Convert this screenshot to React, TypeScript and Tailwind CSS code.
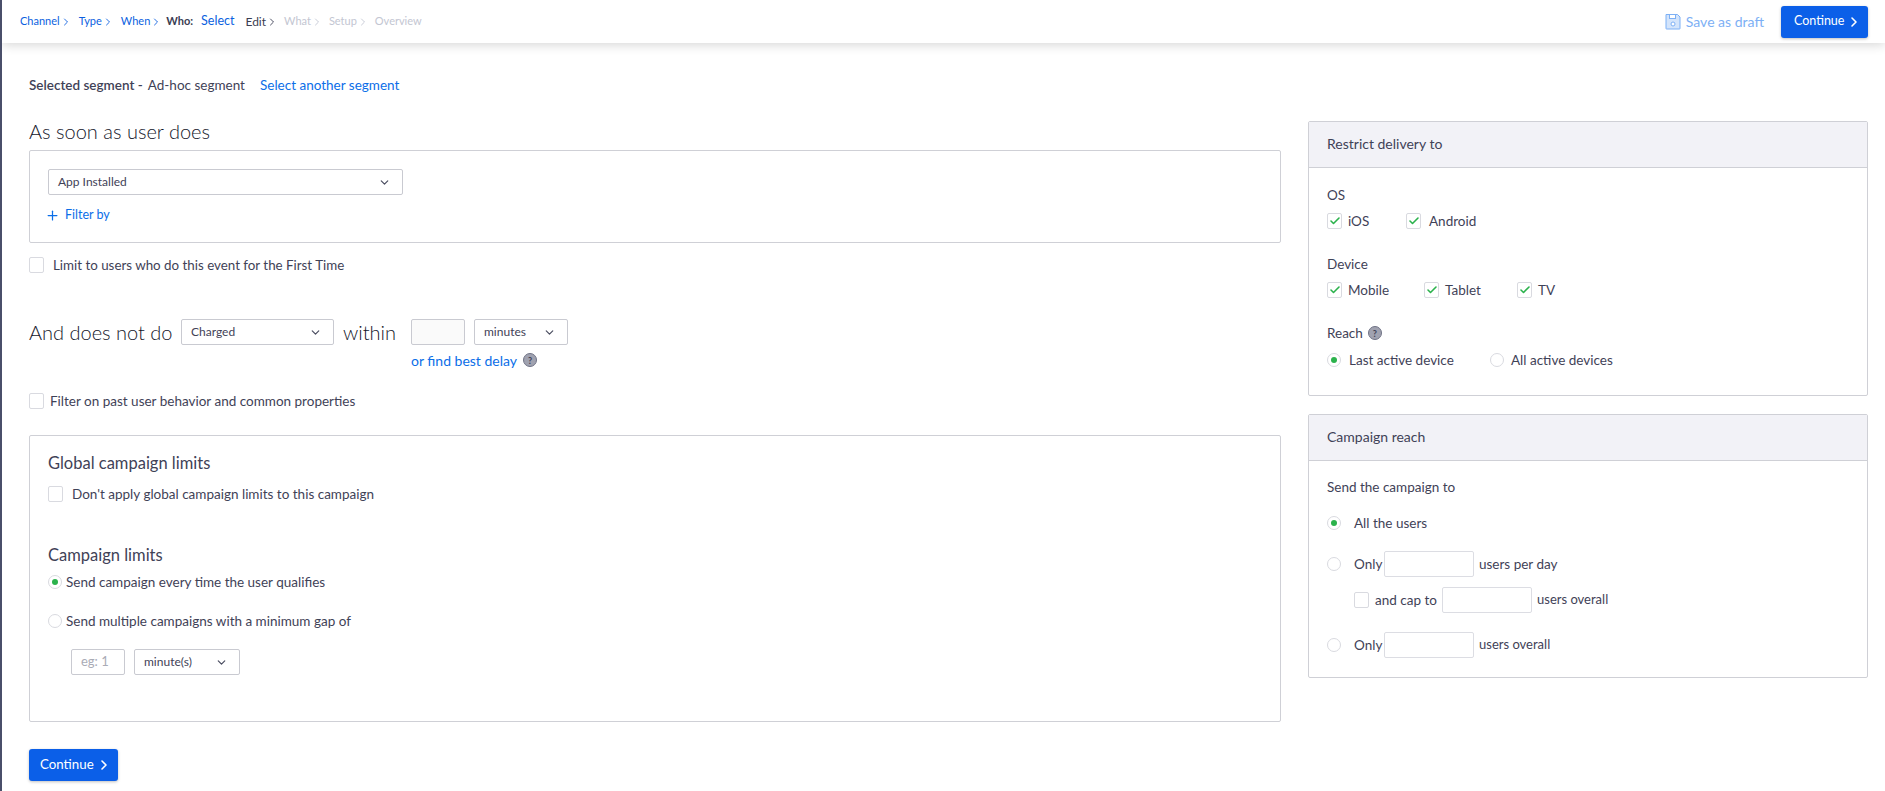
import React from "react";
import { ChevronDown, ChevronRight, Plus, Check } from "lucide-react";

const font = "font-['Lato','Open_Sans',sans-serif]";

function Crumb({ label, tone, className = "" }: { label: string; tone: "blue" | "dark" | "mute"; className?: string }) {
  const c = tone === "blue" ? "text-[#0b5fe0]" : tone === "dark" ? "text-[#3a3d52]" : "text-[#c3c6d2]";
  return (
    <span className={`flex items-center text-[11px] ${c} ${className}`}>
      {label}
      <ChevronRight size={12} strokeWidth={1.8} />
    </span>
  );
}

function Box({ checked = false, className = "" }: { checked?: boolean; className?: string }) {
  return (
    <span className={`flex h-[16px] w-[15px] shrink-0 items-center justify-center rounded-[2px] border border-[#d9dae0] bg-white ${className}`}>
      {checked && <Check size={12} strokeWidth={3.2} className="text-[#2bb24c]" />}
    </span>
  );
}

function Radio({ on = false, className = "" }: { on?: boolean; className?: string }) {
  return (
    <span className={`flex h-[14px] w-[14px] shrink-0 items-center justify-center rounded-full border border-[#d9dae0] bg-white ${className}`}>
      {on && <span className="h-[6px] w-[6px] rounded-full bg-[#2bb24c]" />}
    </span>
  );
}

function Select({ label, className = "" }: { label: string; className?: string }) {
  return (
    <div className={`flex h-[26px] shrink-0 items-center justify-between rounded-[2px] border border-[#c9cad1] bg-white pl-[9px] pr-[11px] text-[12px] text-[#3f4257] ${className}`}>
      <span>{label}</span>
      <ChevronDown size={13} strokeWidth={2.2} className="text-[#4a4d60]" />
    </div>
  );
}

function Help() {
  return (
    <span className="flex h-[14px] w-[14px] items-center justify-center rounded-full border border-[#6f7285] bg-[#a0a2b0] text-[9px] font-bold leading-none text-[#3f4257]">
      ?
    </span>
  );
}

function ContinueBtn({ className = "" }: { className?: string }) {
  return (
    <button className={`flex items-center gap-[2px] rounded-[3px] bg-[#0b5fe8] text-white shadow-[0_1px_3px_rgba(0,0,0,0.25)] ${className}`}>
      Continue
      <ChevronRight size={16} strokeWidth={2.4} />
    </button>
  );
}

function NumInput() {
  return <div className="h-[26px] w-[90px] shrink-0 rounded-[2px] border border-[#dcdde3] bg-white" />;
}

function SidePanel({ title, children, className = "" }: { title: string; children: React.ReactNode; className?: string }) {
  return (
    <section className={`rounded-[2px] border border-[#cfd0d6] bg-white ${className}`}>
      <div className="flex h-[46px] items-center border-b border-[#cfd0d6] bg-[#f2f2f7] pb-[3px] pl-[18px] text-[14px] text-[#3f4257]">{title}</div>
      {children}
    </section>
  );
}

export default function App() {
  return (
    <div className={`${font} relative h-[791px] w-[1885px] overflow-hidden border-l-[2px] border-[#4a4f6a] bg-white text-[13.5px] text-[#3f4257]`}>
      <header className="flex h-[43px] items-center justify-between bg-white pl-[18px] pr-[17px] shadow-[0_2px_10px_rgba(0,0,0,0.16)]">
        <nav className="flex items-center gap-[7px]">
          <Crumb label="Channel" tone="blue" />
          <Crumb label="Type" tone="blue" />
          <Crumb label="When" tone="blue" />
          <span className="-ml-[3px] flex items-center gap-[8px] text-[11px]">
            <b className="font-bold text-[#3a3d52]">Who:</b>
            <span className="text-[12.5px] text-[#0b5fe0]">Select</span>
          </span>
          <Crumb label="Edit" tone="dark" className="ml-[4px] text-[12px]" />
          <Crumb label="What" tone="mute" className="-ml-[1px]" />
          <Crumb label="Setup" tone="mute" className="-ml-[1px]" />
          <span className="-ml-[1px] text-[11px] text-[#c3c6d2]">Overview</span>
        </nav>
        <div className="flex items-center gap-[17px]">
          <span className="flex items-center gap-[5px] text-[14px] text-[#7db0f5]">
            <svg width="16" height="17" viewBox="0 0 16 17" fill="none">
              <path d="M1 1.5h11.5L15 4v11.5a.5.5 0 0 1-.5.5h-13a.5.5 0 0 1-.5-.5z" fill="#d3e4fb" stroke="#7db0f5" />
              <rect x="4.5" y="1.5" width="6" height="4" fill="#fff" stroke="#7db0f5" />
              <circle cx="8" cy="11" r="2" fill="#fff" stroke="#7db0f5" />
            </svg>
            Save as draft
          </span>
          <ContinueBtn className="h-[32px] w-[87px] pl-[13px] text-[12.5px]" />
        </div>
      </header>

      <main className="flex items-start pl-[27px] pr-[17px]">
        <div className="w-[1252px] shrink-0">
          <p className="mt-[33px] flex h-[18px] items-center">
            <span className="font-semibold">Selected segment -</span>
            <span className="ml-[5px]">Ad-hoc segment</span>
            <span className="ml-[15px] text-[#0b6ee8]">Select another segment</span>
          </p>
          <h2 className="mt-[24px] h-[26px] text-[20px] font-light leading-[26px] text-[#14162a]">As soon as user does</h2>
          <section className="mt-[6px] h-[93px] rounded-[2px] border border-[#cfd0d6] pl-[18px] pt-[18px]">
            <Select label="App Installed" className="w-[355px]" />
            <div className="-ml-[3px] mt-[10px] flex h-[20px] items-center gap-[5px] text-[12.5px] text-[#0b6ee8]">
              <Plus size={15} strokeWidth={2} />
              Filter by
            </div>
          </section>
          <label className="mt-[14px] flex h-[16px] items-center gap-[9px] text-[13.35px]">
            <Box />
            Limit to users who do this event for the First Time
          </label>

          <div className="mt-[46px] flex items-start">
            <span className="w-[152px] text-[20px] font-light leading-[26px] text-[#14162a]">And does not do</span>
            <Select label="Charged" className="w-[153px]" />
            <span className="ml-[9px] w-[68px] text-[20px] font-light leading-[26px] text-[#14162a]">within</span>
            <div>
              <div className="flex gap-[9px]">
                <div className="h-[26px] w-[54px] rounded-[2px] border border-[#c9cad1] bg-[#fafafa]" />
                <Select label="minutes" className="w-[94px]" />
              </div>
              <div className="mt-[5px] flex h-[20px] items-center gap-[6px] text-[14px] text-[#0b6ee8]">
                or find best delay
                <Help />
              </div>
            </div>
          </div>

          <label className="mt-[23px] flex h-[16px] items-center gap-[6px]">
            <Box />
            Filter on past user behavior and common properties
          </label>

          <section className="mt-[26px] h-[287px] rounded-[2px] border border-[#cfd0d6] pl-[18px] pt-[17px]">
            <h3 className="h-[20px] text-[16.5px] leading-[20px]">Global campaign limits</h3>
            <label className="mt-[13px] flex h-[16px] items-center gap-[9px]">
              <Box />
              Don't apply global campaign limits to this campaign
            </label>
            <h3 className="mt-[43px] h-[20px] text-[16.5px] leading-[20px]">Campaign limits</h3>
            <label className="mt-[9px] flex h-[16px] items-center gap-[4px]">
              <Radio on />
              Send campaign every time the user qualifies
            </label>
            <label className="mt-[23px] flex h-[16px] items-center gap-[4px]">
              <Radio />
              Send multiple campaigns with a minimum gap of
            </label>
            <div className="ml-[23px] mt-[20px] flex gap-[9px]">
              <div className="flex h-[26px] w-[54px] items-center rounded-[2px] border border-[#c9cad1] pl-[9px] text-[13px] text-[#a9abb6]">eg: 1</div>
              <Select label="minute(s)" className="w-[106px]" />
            </div>
          </section>
          <ContinueBtn className="mt-[27px] h-[32px] w-[89px] pl-[11px] text-[13.3px]" />
        </div>

        <aside className="ml-[27px] mt-[78px] flex-1">
          <SidePanel title="Restrict delivery to" className="h-[275px]">
            <div className="pl-[18px]">
              <div className="mt-[18px] h-[18px] leading-[18px]">OS</div>
              <div className="mt-[9px] flex h-[16px] items-center">
                <Box checked />
                <span className="ml-[6px] w-[58px]">iOS</span>
                <Box checked />
                <span className="ml-[8px]">Android</span>
              </div>
              <div className="mt-[26px] h-[18px] leading-[18px]">Device</div>
              <div className="mt-[9px] flex h-[16px] items-center">
                <Box checked />
                <span className="ml-[6px] w-[76px]">Mobile</span>
                <Box checked />
                <span className="ml-[6px] w-[72px]">Tablet</span>
                <Box checked />
                <span className="ml-[6px]">TV</span>
              </div>
              <div className="mt-[26px] flex h-[18px] items-center gap-[5px]">Reach <Help /></div>
              <div className="mt-[10px] flex h-[16px] items-center">
                <Radio on />
                <span className="ml-[8px] w-[141px]">Last active device</span>
                <Radio />
                <span className="ml-[7px]">All active devices</span>
              </div>
            </div>
          </SidePanel>
          <SidePanel title="Campaign reach" className="mt-[18px] h-[264px]">
            <div className="pl-[18px]">
              <div className="mt-[17px] h-[18px] leading-[18px]">Send the campaign to</div>
              <div className="mt-[19px] flex h-[16px] items-center">
                <Radio on />
                <span className="ml-[13px]">All the users</span>
              </div>
              <div className="mt-[20px] flex h-[26px] items-center">
                <Radio />
                <span className="ml-[13px] w-[30px]">Only</span>
                <NumInput />
                <span className="ml-[5px]">users per day</span>
              </div>
              <div className="ml-[27px] mt-[10px] flex h-[26px] items-center">
                <Box />
                <span className="ml-[6px] w-[67px]">and cap to</span>
                <NumInput />
                <span className="ml-[5px] text-[13px]">users overall</span>
              </div>
              <div className="mt-[19px] flex h-[26px] items-center">
                <Radio />
                <span className="ml-[13px] w-[30px]">Only</span>
                <NumInput />
                <span className="ml-[5px] text-[13px]">users overall</span>
              </div>
            </div>
          </SidePanel>
        </aside>
      </main>
    </div>
  );
}
